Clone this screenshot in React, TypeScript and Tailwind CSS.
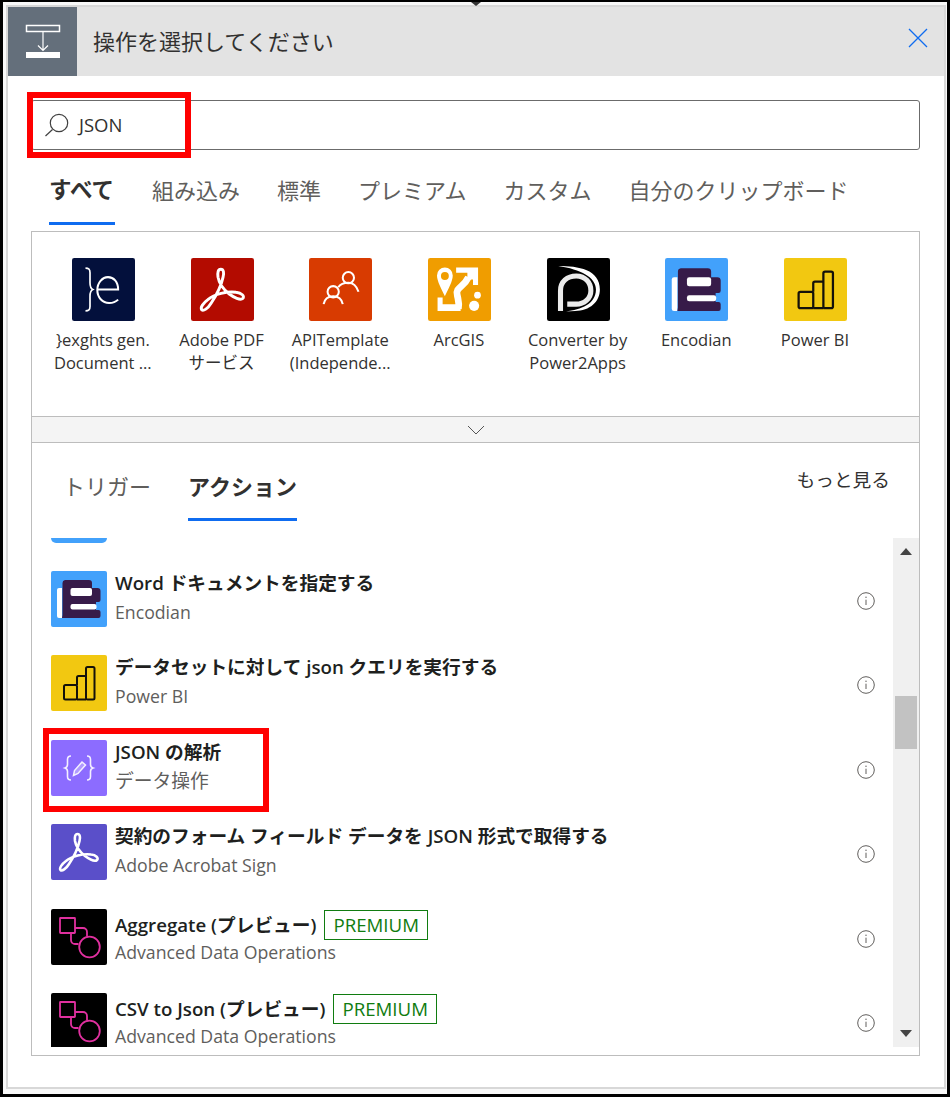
import { ReactNode } from "react";

const iconBox = "block h-full w-full";

function ExghtsIcon() {
  return (
    <svg viewBox="0 0 56 56" className={iconBox}>
      <rect width="56" height="56" rx="2" fill="#03103c" />
      <path d="M12 9c3 0 4 1 4 4v9c0 3 .5 5 2.500 6-2 1-2.500 3-2.500 6v9c0 3-1 4-4 4" fill="none" stroke="#fff" strokeWidth="1.500" />
      <path d="M23 28h18c0-7-4-11-9-11s-9.500 5-9.500 11.500S27 40 33 40c3 0 6-1 8-3" fill="none" stroke="#fff" strokeWidth="1.800" />
    </svg>
  );
}

const adobePath =
  "M26.500 10C24 10 23.500 13 24 17c1 6 5 11 10 15 4 3 10 6 12 4 2-2-1-5-6-5.500-8-1-19 1.500-25 6.500-4 3-7 7-5.500 9 1.500 1.500 5.500-1 8.500-6 4-6 9-16 10.500-23 1-4 .500-7-2-7z";

function AdobeIcon({ bg }: { bg: string }) {
  return (
    <svg viewBox="0 0 56 56" className={iconBox}>
      <rect width="56" height="56" rx="2" fill={bg} />
      <path d={adobePath} fill="none" stroke="#fff" strokeWidth="2.600" strokeLinejoin="round" />
    </svg>
  );
}

function ApiTemplateIcon() {
  return (
    <svg viewBox="0 0 56 56" fill="none" stroke="#fff" strokeWidth="1.800" className={iconBox}>
      <rect width="56" height="56" rx="2" fill="#d83b01" stroke="none" />
      <circle cx="35" cy="17.500" r="5" />
      <path d="M26 26c2-3 5-4 9-4s7 2 9 8" />
      <circle cx="21.500" cy="30" r="5" />
      <path d="M13 41c1-5 4-7 8.500-7s7.500 2 8.500 7" />
    </svg>
  );
}

function ArcGisIcon() {
  return (
    <svg viewBox="0 0 56 56" className={iconBox}>
      <rect width="56" height="56" rx="2" fill="#f09d00" />
      <path d="M15 8.500a7 7 0 0 1 7 7c0 5-4 12-7 18.500-3-6.500-7-13.500-7-18.500a7 7 0 0 1 7-7z" fill="#fff" />
      <circle cx="15" cy="16" r="3.500" fill="#f09d00" />
      <path d="M25 8.500h19.500V24H40v-5h-5v-6H25z" fill="#fff" />
      <path d="M36 17c-4 9-12 9-10 16 1 5 2 7 1 12" fill="none" stroke="#fff" strokeWidth="6" />
      <path d="M8.500 35H13v6h16v6H8.500z" fill="#fff" />
      <circle cx="44" cy="33" r="3" fill="#fff" />
      <circle cx="41" cy="42.500" r="4.500" fill="#fff" />
    </svg>
  );
}

function ConverterIcon() {
  return (
    <svg viewBox="0 0 56 56" fill="none" className={iconBox}>
      <rect width="56" height="56" rx="2" fill="#000" />
      <path d="M10 7c18 0 37 3 37 21 0 11-9 19-22 19l-8 .5c13-1.500 26.500-6.500 26.500-19.500C43.500 17 30 10 10 7z" fill="#fff" />
      <path d="M12 47V29c0-8 6-13 14-13s13 6 13 13-6 12-13 12h-8" stroke="#fff" strokeWidth="4.500" opacity="0.920" />
    </svg>
  );
}

function EncodianIcon() {
  return (
    <svg viewBox="0 0 56 56" className={iconBox}>
      <rect width="56" height="56" rx="2" fill="#42a1fb" />
      <path d="M8 17h3v30H8a2 2 0 0 1-2-2V19a2 2 0 0 1 2-2z" fill="#fff" />
      <path d="M14 9h24a3 3 0 0 1 3 3v5h5.500a3 3 0 0 1 3 3v9a2 2 0 0 1-2 2H45v8h2.500a2 2 0 0 1 2 2v4a2 2 0 0 1-2 2H11l.5-3V12a3 3 0 0 1 2.500-3z" fill="#371b49" />
      <rect x="19.500" y="17" width="21.500" height="8" rx="2" fill="#fff" />
      <rect x="19.500" y="33" width="26" height="5.500" rx="2" fill="#fff" />
    </svg>
  );
}

function PowerBiIcon() {
  return (
    <svg viewBox="0 0 56 56" fill="none" stroke="#14110a" strokeWidth="2" className={iconBox}>
      <rect width="56" height="56" rx="2" fill="#f2c811" stroke="none" />
      <rect x="13" y="30" width="13" height="14.500" rx="1.500" />
      <path d="M26 30v-7.500a1.500 1.500 0 0 1 1.500-1.500H35M26 44.500h9" />
      <rect x="35" y="12" width="8.500" height="32.500" rx="1.500" />
    </svg>
  );
}

function DataOperationIcon() {
  return (
    <svg viewBox="0 0 56 56" fill="none" stroke="#fff" className={iconBox}>
      <rect width="56" height="56" rx="2" fill="#8c6cff" stroke="none" />
      <path d="M20 16c-3 0-3.500 1.500-3.500 3.500v5c0 2-1 3-2.500 3.500 1.500.5 2.500 1.500 2.500 3.500v5c0 2 .5 3.500 3.500 3.500" strokeWidth="1.600" opacity="0.900" />
      <path d="M36 16c3 0 3.500 1.500 3.500 3.500v5c0 2 1 3 2.500 3.500-1.500.5-2.500 1.500-2.500 3.500v5c0 2-.5 3.500-3.500 3.500" strokeWidth="1.600" opacity="0.900" />
      <path d="M22.500 35.500l1-5 7.500-8.500 3.500 3-7.500 8.500z" fill="#fff" fillOpacity="0.350" strokeWidth="1.500" opacity="0.900" />
    </svg>
  );
}

function AdvancedDataIcon() {
  return (
    <svg viewBox="0 0 56 56" fill="none" stroke="#e0309f" strokeWidth="1.800" className={iconBox}>
      <rect width="56" height="56" rx="2" fill="#000" stroke="none" />
      <rect x="9" y="9" width="15" height="15" rx="0.500" />
      <path d="M24 19h8a4 4 0 0 1 4 4v4.500M20 24v7a4 4 0 0 0 4 4h3.500" />
      <circle cx="38.500" cy="38" r="10.300" />
    </svg>
  );
}

function InfoIcon() {
  return (
    <svg viewBox="0 0 18 18" fill="none" stroke="#605e5c" className="h-[18px] w-[18px]">
      <circle cx="9" cy="9" r="8.300" strokeWidth="1" />
      <path d="M9 7.700v5.300" strokeWidth="1" />
      <circle cx="9" cy="5.300" r="0.700" fill="#605e5c" stroke="none" />
    </svg>
  );
}

function PremiumBadge() {
  return (
    <span className="ml-2 flex h-[30px] items-center border border-[#107c10] px-2 text-[18.700px] font-normal text-[#107c10]">
      PREMIUM
    </span>
  );
}

const connectors: { label: ReactNode; icon: ReactNode }[] = [
  { label: <>{"}exghts gen."}<br />Document ...</>, icon: <ExghtsIcon /> },
  { label: <>Adobe PDF<br />サービス</>, icon: <AdobeIcon bg="#b30b00" /> },
  { label: <>APITemplate<br />(Independe...</>, icon: <ApiTemplateIcon /> },
  { label: "ArcGIS", icon: <ArcGisIcon /> },
  { label: <>Converter by<br />Power2Apps</>, icon: <ConverterIcon /> },
  { label: "Encodian", icon: <EncodianIcon /> },
  { label: "Power BI", icon: <PowerBiIcon /> },
];

type Action = {
  title: string;
  sub: string;
  icon: ReactNode;
  premium?: boolean;
  marked?: boolean;
};

const actions: Action[] = [
  { title: "Word ドキュメントを指定する", sub: "Encodian", icon: <EncodianIcon /> },
  { title: "データセットに対して json クエリを実行する", sub: "Power BI", icon: <PowerBiIcon /> },
  { title: "JSON の解析", sub: "データ操作", icon: <DataOperationIcon />, marked: true },
  { title: "契約のフォーム フィールド データを JSON 形式で取得する", sub: "Adobe Acrobat Sign", icon: <AdobeIcon bg="#5a4fc9" /> },
  { title: "Aggregate (プレビュー)", sub: "Advanced Data Operations", icon: <AdvancedDataIcon />, premium: true },
  { title: "CSV to Json (プレビュー)", sub: "Advanced Data Operations", icon: <AdvancedDataIcon />, premium: true },
];

const tabs = ["すべて", "組み込み", "標準", "プレミアム", "カスタム", "自分のクリップボード"];

export default function App() {
  return (
    <div className="relative h-[1097px] w-[950px] overflow-hidden border-x-[3px] border-b-[3px] border-t-2 border-black bg-[#f8f8f8] pb-[5px] pl-[3px] pr-[1px] pt-[3px] font-['Open_Sans','Noto_Sans_CJK_JP',sans-serif] text-[#323130]">
      {/* little callout notch on the top edge */}
      <div className="absolute left-[468px] top-0 h-0 w-0 border-x-[5px] border-t-[4px] border-x-transparent border-t-[#333]" />

      <div className="flex h-full flex-col border-2 border-[#d8d8d8]">
        <header className="flex h-[69px] shrink-0 items-center bg-[#e3e3e3]">
          <div className="flex h-[69px] w-[69px] items-center justify-center bg-[#646f7b]">
            <svg viewBox="0 0 36 36" fill="none" stroke="#fff" className="h-9 w-9">
              <rect x="1.500" y="1.500" width="33" height="6" strokeWidth="1.500" />
              <path d="M18 8v18M13 21.500l5 5 5-5" strokeWidth="1.200" />
              <rect x="1" y="28" width="34" height="6" fill="#fff" stroke="none" />
            </svg>
          </div>
          <h1 className="ml-4 flex-1 text-[22px] font-normal">操作を選択してください</h1>
          <svg viewBox="0 0 20 20" fill="none" stroke="#0f6cf0" strokeWidth="1.300" className="mb-[7px] mr-4 h-5 w-5">
            <path d="M1 1l18 18M19 1L1 19" />
          </svg>
        </header>

        <div className="flex min-h-0 flex-1 flex-col bg-white pl-[23px] pr-[24px]">
          <div className="relative mt-6 flex h-[50px] shrink-0 items-center rounded-[3px] border border-[#6b6b6b] pl-3">
            <svg viewBox="0 0 26 26" fill="none" stroke="#404040" strokeWidth="1.200" className="h-[26px] w-[26px]">
              <circle cx="15" cy="11" r="8.700" />
              <path d="M8.500 17.500L1.500 24" />
            </svg>
            <span className="ml-[9px] text-[18.500px]">JSON</span>
            <div className="absolute -left-[5px] -top-[9px] h-[66px] w-[164px] border-[6px] border-[#ff0000]" />
          </div>

          <nav className="flex h-[81px] shrink-0 items-start gap-[37px] pl-[18px] pt-[22px] text-[22px] leading-[36px] text-[#605e5c]">
            {tabs.map((t, i) => (
              <span
                key={t}
                className={
                  i === 0
                    ? "h-[53px] w-[66px] border-b-[3px] border-[#0f6cf0] text-[22.500px] font-bold text-[#323130]"
                    : ""
                }
              >
                {t}
              </span>
            ))}
          </nav>

          <section className="flex min-h-0 flex-1 flex-col border border-[#bdbdbd]">
            <div className="grid h-[184px] shrink-0 grid-cols-[repeat(7,118.700px)] pl-3 pt-[26px]">
              {connectors.map((c, i) => (
                <div key={i} className="flex flex-col items-center text-center">
                  <div className="h-[63px] w-[63px]">{c.icon}</div>
                  <div className="-ml-px mt-[7px] text-[16.500px] leading-[23px]">{c.label}</div>
                </div>
              ))}
            </div>
            <div className="flex h-[27px] shrink-0 items-center justify-center border-y border-[#bdbdbd] bg-[#f4f4f4]">
              <svg viewBox="0 0 18 10" fill="none" stroke="#555" strokeWidth="1" className="h-[10px] w-[18px]">
                <path d="M1 1l8 8 8-8" />
              </svg>
            </div>

            <div className="flex h-[95px] shrink-0 items-start justify-between pl-[31px] pr-[29px]">
              <div className="flex gap-[37px] pt-[25px] text-[22px] leading-[36px] text-[#605e5c]">
                <span>トリガー</span>
                <span className="h-[53px] border-b-[3px] border-[#0f6cf0] font-bold text-[#323130]">アクション</span>
              </div>
              <span className="pt-[24px] text-[18.700px] leading-[26px]">もっと見る</span>
            </div>

            <div className="flex min-h-0 flex-1 pb-2">
              <div className="min-w-0 flex-1 overflow-hidden">
                <div className="mb-[28px] ml-[19px] h-[5px] w-[56px] rounded-b-[5px] bg-[#42a1fb]" />
                {actions.map((a) => (
                  <div key={a.title} className="relative flex h-[84.400px] items-start pl-[19px] pr-[18px]">
                    <div className="h-[56px] w-[56px] shrink-0">{a.icon}</div>
                    <div className="ml-2 min-w-0 flex-1">
                      <div className={`flex items-center text-[18.700px] font-semibold text-[#201f1e] ${a.premium ? "h-[32px]" : "h-[24px]"}`}>
                        {a.title}
                        {a.premium && <PremiumBadge />}
                      </div>
                      <div className={`leading-[22px] text-[#605e5c] ${a.premium ? "mt-0" : "mt-[6px]"} ${a.marked ? "text-[18.800px]" : "text-[17.700px]"}`}>
                        {a.sub}
                      </div>
                    </div>
                    <div className="mt-[21px]">
                      <InfoIcon />
                    </div>
                    {a.marked && (
                      <div className="absolute -top-[12px] left-[11px] h-[84px] w-[226px] border-[6px] border-[#ff0000]" />
                    )}
                  </div>
                ))}
              </div>
              <div className="relative flex w-[26px] shrink-0 flex-col items-center justify-between bg-[#f0f0f0] py-[10px]">
                <div className="h-0 w-0 border-x-[6px] border-b-[7px] border-x-transparent border-b-[#444]" />
                <div className="absolute left-[2px] top-[158px] h-[53px] w-[22px] bg-[#c2c2c2]" />
                <div className="h-0 w-0 border-x-[6px] border-t-[7px] border-x-transparent border-t-[#444]" />
              </div>
            </div>
          </section>
          <div className="h-[31px] shrink-0" />
        </div>
      </div>
    </div>
  );
}
